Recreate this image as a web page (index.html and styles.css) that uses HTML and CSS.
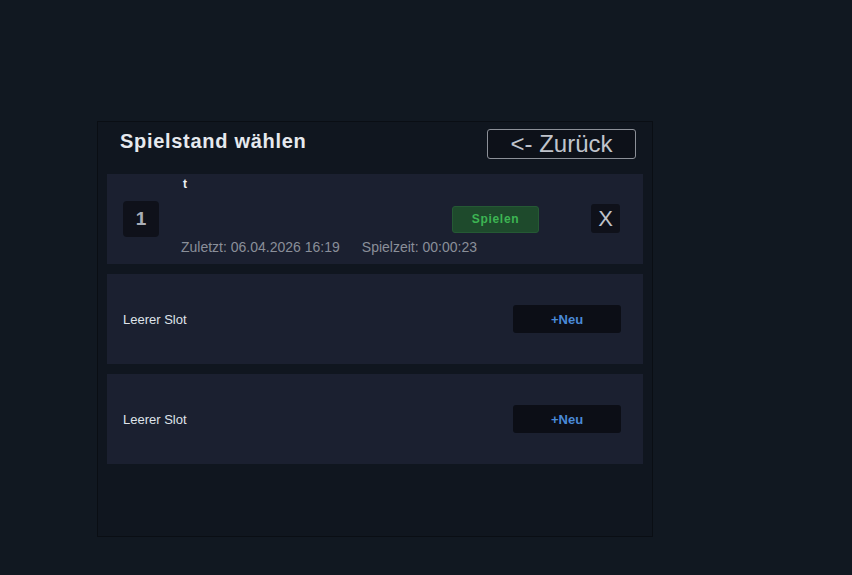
FILE: index.html
```html
<!DOCTYPE html>
<html lang="de">
<head>
<meta charset="utf-8">
<title>Spielstand wählen</title>
<link rel="stylesheet" href="styles.css">
</head>
<body>
<div class="panel">
  <div class="header">
    <h1 class="title">Spielstand wählen</h1>
    <button class="back">&lt;- Zurück</button>
  </div>
  <div class="slots">
    <div class="slot slot-used">
      <div class="num">1</div>
      <div class="info">
        <div class="name">t</div>
        <div class="meta"><span>Zuletzt: 06.04.2026 16:19</span><span>Spielzeit: 00:00:23</span></div>
      </div>
      <button class="play">Spielen</button>
      <button class="del">X</button>
    </div>
    <div class="slot slot-empty">
      <span class="empty-label">Leerer Slot</span>
      <button class="new">+Neu</button>
    </div>
    <div class="slot slot-empty">
      <span class="empty-label">Leerer Slot</span>
      <button class="new">+Neu</button>
    </div>
  </div>
</div>
</body>
</html>
```
FILE: styles.css
```css
html, body {
  margin: 0;
  padding: 0;
}
body {
  background: #111821;
  width: 852px;
  height: 575px;
  font-family: "Liberation Sans", Arial, sans-serif;
  padding-top: 121px;
  padding-left: 97px;
  box-sizing: border-box;
}
.panel {
  width: 556px;
  height: 416px;
  box-sizing: border-box;
  border: 1px solid #0a0e14;
  background: #10161f;
  padding: 0 9px;
}
.header {
  display: flex;
  justify-content: space-between;
  align-items: flex-start;
  padding: 7px 7px 0 13px;
  height: 45px;
}
.title {
  margin: 0;
  font-size: 20px;
  font-weight: bold;
  letter-spacing: 0.7px;
  color: #e6e9ee;
  line-height: 24px;
}
.back {
  width: 149px;
  height: 30px;
  box-sizing: border-box;
  border: 1px solid #8c9098;
  border-radius: 3px;
  background: #0d1119;
  color: #c0c4cc;
  font-family: "Liberation Sans", Arial, sans-serif;
  font-size: 24px;
  line-height: 26px;
  padding: 0;
}
.slots {
  display: flex;
  flex-direction: column;
  gap: 10px;
}
.slot {
  height: 90px;
  background: #1b2030;
  display: flex;
  align-items: center;
  box-sizing: border-box;
}
.slot-used {
  padding: 0 23px 0 16px;
}
.num {
  width: 36px;
  height: 36px;
  border-radius: 4px;
  background: #0f111a;
  color: #a9aeb7;
  font-weight: bold;
  font-size: 19px;
  display: flex;
  align-items: center;
  justify-content: center;
}
.info {
  flex: 1;
  min-width: 0;
  align-self: stretch;
  display: flex;
  flex-direction: column;
  justify-content: space-between;
  margin-left: 22px;
  padding: 3px 0 9px 0;
}
.name {
  font-size: 12px;
  font-weight: bold;
  color: #eef0f4;
  line-height: 14px;
  margin-left: 2px;
}
.meta {
  font-size: 14px;
  color: #8a8f99;
  display: flex;
  gap: 22px;
  line-height: 16px;
  white-space: nowrap;
}
.play {
  width: 87px;
  height: 27px;
  box-sizing: border-box;
  background: #1e4a2c;
  border: 1px solid #255934;
  border-radius: 3px;
  color: #3db553;
  font-family: "Liberation Sans", Arial, sans-serif;
  font-weight: bold;
  font-size: 12px;
  letter-spacing: 0.7px;
  padding: 0;
  margin-right: 52px;
}
.del {
  width: 29px;
  height: 29px;
  box-sizing: border-box;
  border: none;
  border-radius: 3px;
  background: #0f111a;
  color: #bfc3cb;
  font-family: "Liberation Sans", Arial, sans-serif;
  font-size: 22px;
  padding: 0;
  margin-top: -1px;
}
.slot-empty {
  justify-content: space-between;
  padding: 0 22px 0 16px;
}
.empty-label {
  font-size: 13px;
  color: #dfe3ea;
}
.new {
  width: 108px;
  height: 28px;
  border: none;
  border-radius: 3px;
  background: #0c0e16;
  color: #4a8ad8;
  font-family: "Liberation Sans", Arial, sans-serif;
  font-weight: bold;
  font-size: 13px;
  padding: 0;
}
```
